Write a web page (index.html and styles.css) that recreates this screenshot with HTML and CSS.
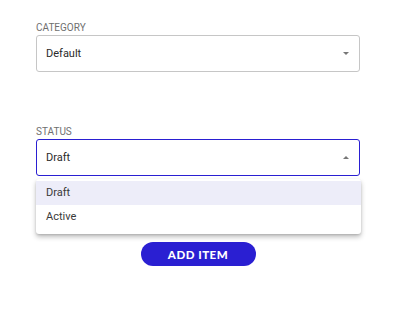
FILE: index.html
```html
<!DOCTYPE html>
<html>
<head>
    <title>New item</title>
    <link rel="stylesheet" href="styles.css">
</head>
<body>
<div class="form">
    <div class="field">
        <label class="field-label">Category</label>
        <div class="select">
            <span class="select-value">Default</span>
            <span class="caret"></span>
        </div>
    </div>

    <div class="field field-status">
        <label class="field-label">Status</label>
        <div class="select select-open">
            <span class="select-value">Draft</span>
            <span class="caret caret-up"></span>
        </div>
        <ul class="menu">
            <li class="menu-item selected">Draft</li>
            <li class="menu-item">Active</li>
        </ul>
    </div>

    <div class="actions">
        <button class="add-btn">Add item</button>
    </div>
</div>
</body>
</html>
```

FILE: styles.css
```css
body {
    margin: 0;
    font-family: Roboto, "Liberation Sans", sans-serif;
    background: #fff;
}

.form {
    width: 324px;
    padding: 22px 0 0 36px;
}

.field { position: relative; }
.field-status { margin-top: 54px; }

.field-label {
    display: block;
    font-size: 10px;
    line-height: 12px;
    color: #6f6f6f;
    text-transform: uppercase;
    margin-bottom: 1px;
}

.select {
    box-sizing: border-box;
    height: 37px;
    border: 1px solid #c6c6c6;
    border-radius: 3px;
    display: flex;
    align-items: center;
    padding: 0 10px 0 9px;
}

.select-open { border-color: #2a1fd2; }

.select-value {
    flex-grow: 1;
    font-size: 11px;
    color: #2a2a2a;
}

.caret {
    width: 0;
    height: 0;
    border-left: 3px solid transparent;
    border-right: 3px solid transparent;
    border-top: 3px solid #777;
}

.caret-up {
    border-top: none;
    border-bottom: 3px solid #777;
}

.menu {
    position: absolute;
    left: 0;
    right: -1px;
    top: 53px;
    margin: 0;
    padding: 2px 0 5px;
    list-style: none;
    background: #fff;
    border-radius: 3px;
    box-shadow: 0 3px 5px rgba(0, 0, 0, .25), 0 1px 2px rgba(0, 0, 0, .12);
    z-index: 2;
}

.menu-item {
    height: 24px;
    line-height: 24px;
    padding-left: 10px;
    font-size: 11px;
    color: #3a3a3a;
}

.menu-item.selected { background-color: #ededf9; }

.actions {
    display: flex;
    justify-content: center;
    margin-top: 66px;
}

.add-btn {
    width: 115px;
    height: 24px;
    border: none;
    border-radius: 12px;
    background-color: #2a1fd2;
    color: #fff;
    font-family: Lato, Roboto, sans-serif;
    font-weight: 900;
    font-size: 11.5px;
    letter-spacing: 0.5px;
    text-transform: uppercase;
    cursor: pointer;
}
```
